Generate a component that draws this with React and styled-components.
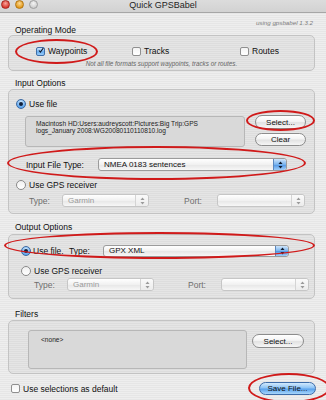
import React from "react";
import styled, { createGlobalStyle, css } from "styled-components";

const GlobalStyle = createGlobalStyle`
  body {
    margin: 0;
    background: #e9e9e9;
  }
`;

const Window = styled.div`
  position: relative;
  width: 326px;
  height: 400px;
  overflow: hidden;
  font-family: "Liberation Sans", Arial, sans-serif;
  font-size: 8.5px;
  color: #111;
  background: repeating-linear-gradient(
    to bottom,
    #eeeeee 0px,
    #eeeeee 1px,
    #e6e6e6 1px,
    #e6e6e6 2px
  );
`;

const TitleBar = styled.div`
  display: grid;
  grid-template-columns: 1fr auto 1fr;
  align-items: center;
  height: 12px;
  border-bottom: 1px solid #a6a6a6;
  background: linear-gradient(#dcdcdc, #d2d2d2);
`;

const Lights = styled.div`
  display: flex;
  gap: 5px;
  padding-left: 1px;
  margin-top: -3px;
`;

const Light = styled.span`
  width: 9px;
  height: 9px;
  border-radius: 50%;
  border: 1px solid ${p => p.$edge};
  box-sizing: border-box;
  background: radial-gradient(circle at 50% 35%, ${p => p.$hi} 0%, ${p => p.$c} 70%);
`;

const Title = styled.div`
  font-size: 9px;
  color: #1e1e1e;
  margin-top: -2px;
`;

const Content = styled.div`
  padding: 0 11px 0 8px;
`;

const Version = styled.div`
  margin-top: 7px;
  height: 6px;
  line-height: 6px;
  padding-right: 2px;
  text-align: right;
  font-size: 6.2px;
  font-style: italic;
  color: #7a7a7a;
`;

const SectionLabel = styled.div`
  margin-top: ${p => p.$top || 0}px;
  margin-left: 7px;
  height: 8px;
  line-height: 8px;
  font-size: 8.5px;
  color: #111;
`;

const Group = styled.div`
  margin-top: ${p => p.$top || 0}px;
  border: 1px solid #c3c3c3;
  border-radius: 5px;
  background: rgba(0, 0, 0, 0.035);
  padding: ${p => p.$pad};
`;

const ModeRow = styled.div`
  display: grid;
  grid-template-columns: 96px 108px auto;
  padding-left: 27px;
  height: 10px;
  align-items: center;
`;

const Hint = styled.div`
  margin-top: 4px;
  height: 7px;
  line-height: 7px;
  text-align: center;
  font-size: 6.3px;
  font-style: italic;
  color: #666;
`;

const Option = styled.label`
  display: flex;
  align-items: center;
  gap: 3px;
  height: 10px;
  margin-left: ${p => p.$left || 0}px;
  margin-top: ${p => p.$top || 0}px;
  white-space: nowrap;
`;

const CheckBox = styled.span`
  width: 9px;
  height: 9px;
  box-sizing: border-box;
  border-radius: 2px;
  display: inline-flex;
  align-items: center;
  justify-content: center;
  ${p =>
    p.$on
      ? css`
          border: 1px solid #3f6fa8;
          background: linear-gradient(#cfe6fb, #6aaef0 55%, #9ccdf8);
        `
      : css`
          border: 1px solid #8f8f8f;
          background: linear-gradient(#f4f4f4, #ffffff);
        `}
`;

const Radio = styled.span`
  width: 10px;
  height: 10px;
  box-sizing: border-box;
  border-radius: 50%;
  display: inline-flex;
  align-items: center;
  justify-content: center;
  ${p =>
    p.$on
      ? css`
          border: 1px solid #3c6aa3;
          background: radial-gradient(circle at 50% 30%, #d6ecfd, #5fa6ee 70%);
        `
      : css`
          border: 1px solid #8a8a8a;
          background: linear-gradient(#f0f0f0, #ffffff);
        `}
`;

const Dot = styled.span`
  width: 4px;
  height: 4px;
  border-radius: 50%;
  background: #10203a;
`;

const FileRow = styled.div`
  display: flex;
  align-items: flex-start;
  margin-top: ${p => (p.$top === undefined ? 6 : p.$top)}px;
`;

const PathBox = styled.div`
  margin-left: ${p => p.$left}px;
  margin-top: ${p => p.$top || 0}px;
  width: ${p => p.$w}px;
  height: ${p => p.$h}px;
  box-sizing: border-box;
  border: 1px solid #b7b7b7;
  border-radius: 3px;
  background: #d9d9d9;
  padding: ${p => p.$pad};
  font-size: 6.6px;
  line-height: 7px;
  color: #222;
`;

const ButtonStack = styled.div`
  display: flex;
  flex-direction: column;
  gap: 4px;
  margin-left: ${p => p.$left}px;
  margin-top: ${p => p.$top || 0}px;
`;

const Pill = styled.button`
  width: ${p => p.$w}px;
  height: ${p => p.$h || 14}px;
  padding: 0;
  border-radius: 8px;
  font-family: inherit;
  font-size: 8px;
  color: #111;
  cursor: pointer;
  ${p =>
    p.$primary
      ? css`
          border: 1px solid #3d6ca8;
          background: linear-gradient(#d3eafd 0%, #8cc3f5 45%, #5aa2ec 55%, #a8d6fb 100%);
        `
      : css`
          border: 1px solid #8c8c8c;
          background: linear-gradient(#ffffff 0%, #f3f3f3 45%, #e2e2e2 55%, #f6f6f6 100%);
        `}
`;

const FieldRow = styled.div`
  display: flex;
  align-items: center;
  height: 13px;
  margin-top: ${p => p.$top || 0}px;
  margin-left: ${p => p.$left || 0}px;
`;

const FieldLabel = styled.span`
  width: ${p => p.$w}px;
  flex: none;
  margin-left: ${p => p.$gap || 0}px;
  color: ${p => (p.$dim ? "#6e6e6e" : "#111")};
  white-space: nowrap;
`;

const Popup = styled.div`
  display: flex;
  align-items: center;
  width: ${p => p.$w}px;
  height: ${p => p.$h || 13}px;
  box-sizing: border-box;
  border: 1px solid ${p => (p.$off ? "#c6c6c6" : "#9b9b9b")};
  border-radius: 3px;
  background: linear-gradient(#ffffff, #f1f1f1 50%, #e6e6e6 51%, #f7f7f7);
  font-size: 8px;
  color: ${p => (p.$off ? "#9a9a9a" : "#111")};
  overflow: hidden;
`;

const PopupText = styled.span`
  flex: 1;
  padding-left: 5px;
  white-space: nowrap;
`;

const Arrows = styled.span`
  width: 12px;
  height: 100%;
  display: flex;
  align-items: center;
  justify-content: center;
  border-left: 1px solid ${p => (p.$off ? "#d4d4d4" : "#5b87bd")};
  border-radius: 0 2px 2px 0;
  background: ${p =>
    p.$off
      ? "linear-gradient(#fafafa, #ececec)"
      : "linear-gradient(#cfe5fb, #78b3ee 50%, #4e95e4 51%, #9fcdf8)"};
`;

const BottomRow = styled.div`
  display: flex;
  align-items: center;
  justify-content: space-between;
  margin-top: 8px;
  padding-left: 3px;
  margin-right: -1px;
`;

const Annotation = styled.div`
  position: absolute;
  left: ${p => p.$x}px;
  top: ${p => p.$y}px;
  width: ${p => p.$w}px;
  height: ${p => p.$h}px;
  border: 2px solid #d01a1a;
  border-radius: 50%;
  box-sizing: border-box;
  pointer-events: none;
`;

function Check() {
  return (
    <svg width="9" height="9" viewBox="0 0 9 9" style={{ marginTop: -2, marginLeft: 1 }}>
      <path d="M1.5 4.5 L3.6 7 L8 0.8" fill="none" stroke="#0d1626" strokeWidth="1.6" />
    </svg>
  );
}

function ArrowGlyph({ off }) {
  const c = off ? "#9a9a9a" : "#0f1b2e";
  return (
    <svg width="5" height="8" viewBox="0 0 5 8">
      <path d="M0.5 3 L2.5 0.5 L4.5 3 Z" fill={c} />
      <path d="M0.5 5 L2.5 7.5 L4.5 5 Z" fill={c} />
    </svg>
  );
}

function Select({ w, h, value, off }) {
  return (
    <Popup $w={w} $h={h} $off={off}>
      <PopupText>{value}</PopupText>
      <Arrows $off={off}>
        <ArrowGlyph off={off} />
      </Arrows>
    </Popup>
  );
}

function ReceiverRow({ top, portGap }) {
  return (
    <FieldRow $top={top} $left={13}>
      <FieldLabel $w={33} $dim>Type:</FieldLabel>
      <Select w={87} value="Garmin" off />
      <FieldLabel $w={33} $gap={portGap} $dim>Port:</FieldLabel>
      <Select w={88} value="" off />
    </FieldRow>
  );
}

export default function App() {
  return (
    <Window>
      <GlobalStyle />
      <TitleBar>
        <Lights>
          <Light $c="#d9382e" $hi="#f7a49a" $edge="#a5261f" />
          <Light $c="#e49b1c" $hi="#fbd995" $edge="#b17412" />
          <Light $c="#cfcfcf" $hi="#f4f4f4" $edge="#9d9d9d" />
        </Lights>
        <Title>Quick GPSBabel</Title>
        <span />
      </TitleBar>

      <Content>
        <Version>using gpsbabel 1.3.2</Version>
        <SectionLabel>Operating Mode</SectionLabel>
        <Group $top={1} $pad="10px 0 3px 0">
          <ModeRow>
            <Option>
              <CheckBox $on><Check /></CheckBox>Waypoints
            </Option>
            <Option>
              <CheckBox />Tracks
            </Option>
            <Option>
              <CheckBox />Routes
            </Option>
          </ModeRow>
          <Hint>Not all file formats support waypoints, tracks or routes.</Hint>
        </Group>

        <SectionLabel $top={8}>Input Options</SectionLabel>
        <Group $top={2} $pad="9px 0 6px 7px">
          <Option>
            <Radio $on><Dot /></Radio>Use file
          </Option>
          <FileRow>
            <PathBox $left={9} $top={1} $w={220} $h={31} $pad="3px 10px">
              Macintosh HD:Users:audreyscott:Pictures:Big Trip:GPS
              <br />
              logs_January 2008:WG20080110110810.log
            </PathBox>
            <ButtonStack $left={10}>
              <Pill $w={51}>Select...</Pill>
              <Pill $w={51} $h={13}>Clear</Pill>
            </ButtonStack>
          </FileRow>
          <FieldRow $top={11} $left={10}>
            <FieldLabel $w={72}>Input File Type:</FieldLabel>
            <Select w={189} value="NMEA 0183 sentences" />
          </FieldRow>
          <Option $top={9}>
            <Radio />Use GPS receiver
          </Option>
          <ReceiverRow top={4} portGap={35} />
        </Group>

        <SectionLabel $top={9}>Output Options</SectionLabel>
        <Group $top={3} $pad="9px 0 7px 12px">
          <FieldRow>
            <Radio $on><Dot /></Radio>
            <FieldLabel $w={36} $gap={2}>Use file.</FieldLabel>
            <FieldLabel $w={34}>Type:</FieldLabel>
            <Select w={186} h={12} value="GPX XML" />
          </FieldRow>
          <Option $top={9}>
            <Radio />Use GPS receiver
          </Option>
          <ReceiverRow top={2} portGap={34} />
        </Group>

        <SectionLabel $top={11}>Filters</SectionLabel>
        <Group $top={2} $pad="9px 0 4px 0">
          <FileRow $top={0}>
            <PathBox $left={19} $w={219} $h={39} $pad="5px 12px">
              &lt;none&gt;
            </PathBox>
            <ButtonStack $left={5} $top={4}>
              <Pill $w={52}>Select...</Pill>
            </ButtonStack>
          </FileRow>
        </Group>

        <BottomRow>
          <Option>
            <CheckBox />Use selections as default
          </Option>
          <Pill $w={57} $h={13} $primary>Save File...</Pill>
        </BottomRow>
      </Content>

      <Annotation $x={15} $y={39} $w={83} $h={25} />
      <Annotation $x={246} $y={110} $w={69} $h={21} />
      <Annotation $x={7} $y={146} $w={299} $h={34} />
      <Annotation $x={4} $y={232} $w={311} $h={27} />
      <Annotation $x={248} $y={373} $w={82} $h={30} />
    </Window>
  );
}
